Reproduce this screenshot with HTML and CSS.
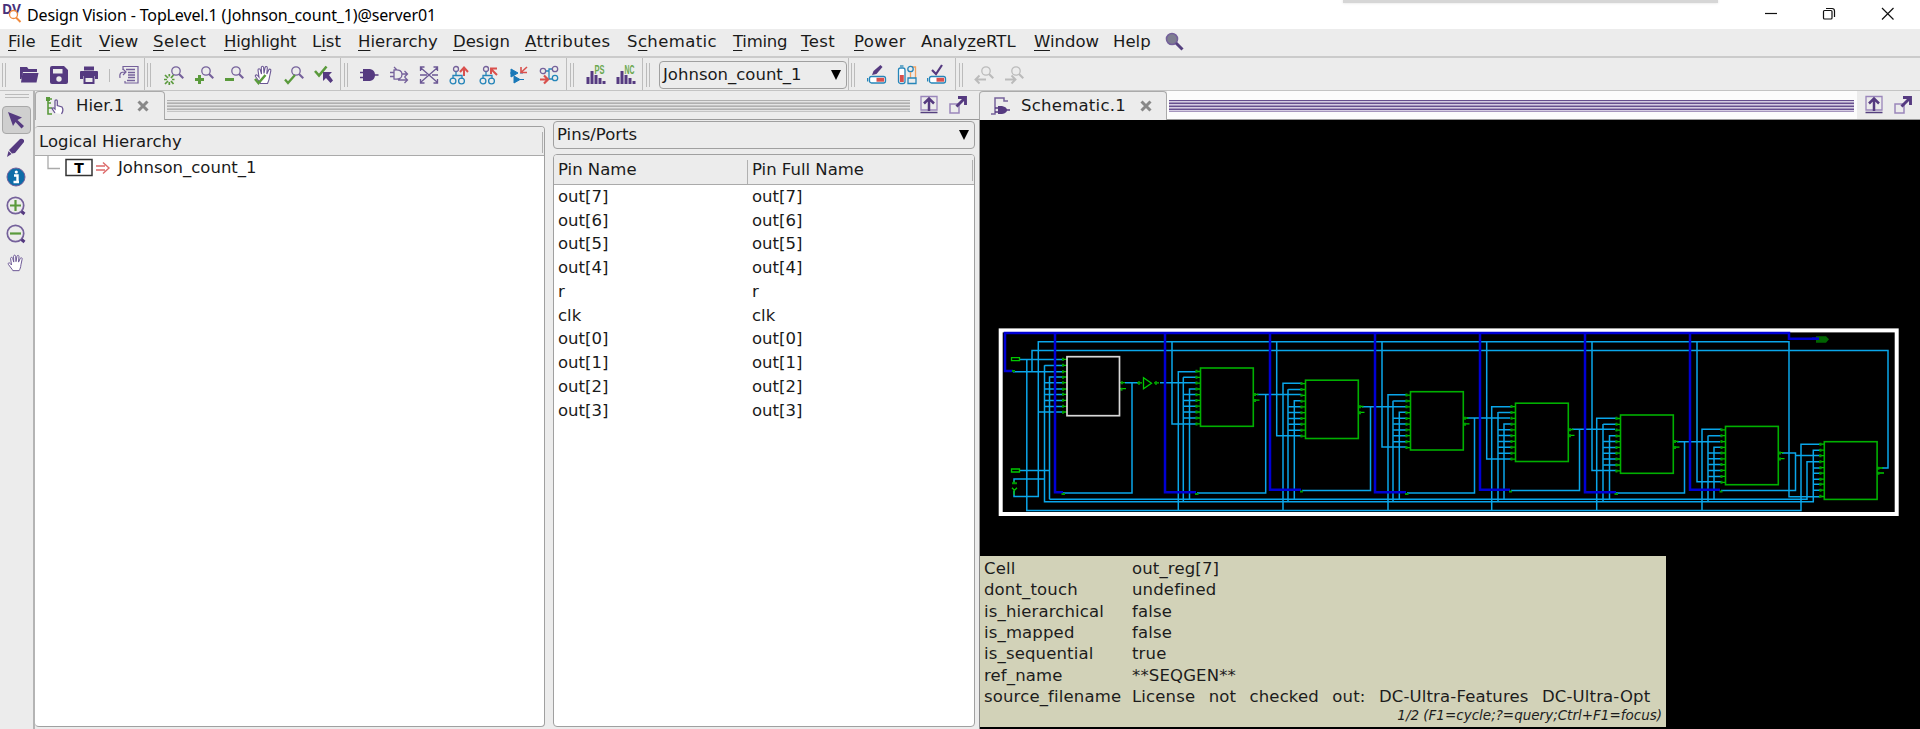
FILE: index.html
```html
<!DOCTYPE html>
<html lang="en">
<head>
<meta charset="utf-8">
<title>Design Vision - TopLevel.1 (Johnson_count_1)@server01</title>
<link rel="stylesheet" href="styles.css">
</head>
<body>
<svg class="defs" width="0" height="0">
  <defs>
    <symbol id="lens" viewBox="0 0 20 20"><circle cx="12" cy="6" r="4.2" fill="none" stroke="currentColor" stroke-width="1.3"/><path d="M15 9l4.3 4.3" stroke="currentColor" stroke-width="2.2"/></symbol>
    <symbol id="hand" viewBox="0 0 20 20"><path d="M6 17.5L1.5 11.5c-.8-1.5 1-2.3 2-1l1.5 1.7L4 5c0-1.7 2-1.7 2.3-.2L7.500 9 7.300 2.500c.2-1.600 2.100-1.600 2.300 0L10 8.500l1.100-6c.4-1.500 2.200-1.200 2.200.4L12.800 9l2-4.200c.8-1.300 2.400-.5 2 1L15.500 12c-.3 3-1 4.500-2 6.500H6.500z" fill="#fff" stroke="#6b5794" stroke-width="1.100"/></symbol>
    <symbol id="pin-up" viewBox="0 0 20 20"><path d="M2 1.500h16v13.500H2z" fill="none" stroke="#9a86bb" stroke-width="1.300"/><path d="M1.500 17.500h17" stroke="#55407f" stroke-width="1.500"/><path d="M10 16V4M5 8.500l5-5 5 5" fill="none" stroke="#553a80" stroke-width="2.500"/></symbol>
    <symbol id="pop-out" viewBox="0 0 20 20"><path d="M2 9h9v9H2z" fill="none" stroke="#9a86bb" stroke-width="1.500"/><path d="M8.500 11.500l8-8M10 2.500h7.500v7.500" fill="none" stroke="#553a80" stroke-width="2.900"/></symbol>
    <symbol id="nodes" viewBox="0 0 20 20"><g fill="none" stroke-width="1.300"><circle cx="7" cy="4" r="2.500" stroke="#75619b"/><path d="M7 6.500V10M4 14v-3.500h9V14" stroke="#2585b9"/><circle cx="4" cy="16" r="2.900" stroke="#2585b9"/><circle cx="12.500" cy="16" r="2.900" stroke="#2585b9"/></g></symbol>
    <symbol id="battery" viewBox="0 0 20 20"><rect x="2.500" y="11.500" width="16" height="6.500" rx="2" fill="#fff" stroke="#2585b9" stroke-width="1.300"/><path d="M.5 13v3.500" stroke="#2585b9" stroke-width="1.500"/><path d="M9.500 12.800h7.700v3.900H9.500z" fill="#d9504d"/></symbol>
    <g id="cell-pins">
      <path class="net" d="M-17.300 9.300h13M-17.300 26.600h13M-17.300 32.400h13M-17.300 38.200h13M-17.300 44h13M-17.300 50h13"/>
      <path class="stub" d="M-5 3.500h5M-5 9.300h5M-5 15.200h5M-5 21h5M-5 26.600h5M-5 32.400h5M-5 38.200h5M-5 44h5M-5 50h5M-5 55.900h5M53 26.300h5M53 32.200h6"/>
      <path class="knob" d="M-4 1.800v3M-4 7.800v3M-4 13.600v3M-4 19.500v3M-4 25.200v3M-4 31v3M-4 36.700v3M-4 42.500v3M-4 48.500v3M-4 54.400v3M54.500 25v3M54.500 31v3"/>
    </g>
    <g id="cell"><use href="#cell-pins"/><rect class="box" width="52.800" height="58.300"/></g>
  </defs>
</svg>

<header class="titlebar">
  <svg class="logo" width="20" height="24" viewBox="0 0 20 24"><text class="logo-text" x="0" y="14" textLength="19" lengthAdjust="spacingAndGlyphs">DV</text><circle cx="11.500" cy="14.500" r="4" fill="#fff" stroke="#f08a3c" stroke-width="1.300"/><path d="M14 17.500l4.500 4.500" stroke="#f08a3c" stroke-width="2"/></svg>
  <h1 class="title">Design Vision - TopLevel.1 (Johnson_count_1)@server01</h1>
  <div class="overhang"></div>
  <svg class="winbtns" width="130" height="14" viewBox="0 0 130 14" fill="none" stroke="#111" stroke-width="1.200"><path d="M1 6.500h12"/><rect x="59.500" y="3.500" width="8.500" height="8.500" rx="1"/><path d="M62 1.500h6a2.500 2.500 0 0 1 2.500 2.500v6"/><path d="M118 1l11.500 11.500M129.500 1L118 12.500"/></svg>
</header>

<nav class="menubar">
  <span><u>F</u>ile</span><span><u>E</u>dit</span><span><u>V</u>iew</span><span class="loose"><u>S</u>elect</span><span class="tight"><u>H</u>ighlight</span><span>L<u>i</u>st</span><span><u>H</u>ierarchy</span><span><u>D</u>esign</span><span class="loose"><u>A</u>ttributes</span><span class="loose">S<u>c</u>hematic</span><span class="tight"><u>T</u>iming</span><span class="loose"><u>T</u>est</span><span class="loose"><u>P</u>ower</span><span>Analy<u>z</u>eRTL</span><span><u>W</u>indow</span><span>Help</span>
  <svg width="20" height="20" viewBox="0 0 20 20"><circle cx="7" cy="7" r="5.500" fill="#7e7e90" stroke="#75619b" stroke-width="1.600"/><path d="M11 11l6.500 6.500" stroke="#55407f" stroke-width="3"/></svg>
</nav>

<div class="toolbar">
  <section class="group g1">
    <i class="grip"></i>
    <svg class="ic" viewBox="0 0 20 20" fill="#553a80"><path d="M1 2h7l1.500 2H18v3H4L2.500 14H1z"/><path d="M3.500 8h16L17.500 17.500H2z"/></svg>
    <svg class="ic" viewBox="0 0 20 20"><path d="M1 3q0-2 2-2h12l4 4v12q0 2-2 2H3q-2 0-2-2z" fill="#553a80"/><path d="M4 4h9.500v4.500H4z" fill="#ececec"/><circle cx="10" cy="14" r="2.700" fill="#ececec"/></svg>
    <svg class="ic" viewBox="0 0 20 20" fill="#553a80"><path d="M5 1.500h10v4H5zM1 7q0-1 1-1h16q1 0 1 1v7h-3v-3H4v3H1z"/><path d="M5.500 12h9v6h-9z" fill="none" stroke="#553a80" stroke-width="2"/></svg>
    <i class="minisep"></i>
    <svg class="ic" viewBox="0 0 20 20" fill="none" stroke="#75619b" stroke-width="1.200"><path d="M4 5V1.500h15V18h-13v-2"/><path d="M7 4.500h9M9 7.500h7M9 10h7M9 12.500h7M8 15.500h8" stroke-width="1.600"/><path d="M1 13c-1-6 2-6 5-6M4 4l3 3-3 3"/></svg>
  </section>
  <section class="group g2">
    <i class="grip"></i>
    <svg class="ic pur" viewBox="0 0 20 20"><use href="#lens"/><g stroke="#5a9a3c" stroke-width="1.700"><path d="M1 10l3 3M9.500 10L7 13M1 19l3-3M9.500 19l-2.500-3M0 14.500h3M8 14.500h2.500M5.300 9v2.500M5.300 17v3"/></g></svg>
    <svg class="ic pur" viewBox="0 0 20 20"><use href="#lens"/><path d="M5.500 10v9M1 14.500h9" stroke="#5a9a3c" stroke-width="3"/></svg>
    <svg class="ic pur" viewBox="0 0 20 20"><use href="#lens"/><path d="M1 14.500h9" stroke="#5a9a3c" stroke-width="3"/></svg>
    <svg class="ic" viewBox="0 0 20 20"><use href="#hand"/><path d="M1 14l3.500 4 7-8" fill="none" stroke="#5a9a3c" stroke-width="2.500"/></svg>
    <svg class="ic pur" viewBox="0 0 20 20"><use href="#lens"/><path d="M1 14.500l3 3.500 7-8" fill="none" stroke="#5a9a3c" stroke-width="2.300"/></svg>
    <svg class="ic" viewBox="0 0 20 20"><path d="M1 6l4 4.500L12.500 1.500" fill="none" stroke="#5a9a3c" stroke-width="2.600"/><path d="M9 7h9l-3 3 4 5.500-2.500 2.500-4.500-5-3 3z" fill="#553a80"/></svg>
  </section>
  <section class="group g3">
    <i class="grip"></i>
    <svg class="ic" viewBox="0 0 20 20" fill="#553a80"><path d="M4 4h7q5 1 5 6t-5 6H4z"/><path d="M1 7.500h4M1 12.500h4M15 10h4.500" stroke="#553a80" stroke-width="1.600"/></svg>
    <svg class="ic" viewBox="0 0 20 20" fill="none" stroke="#75619b" stroke-width="1.300"><path d="M5 5q8-1 8 4.500T5 14zM1 7.500h4M1 11.500h4M13 9h5M9 15h9M15.500 6l3 3-3 3M15.500 12l3 3-3 3M5 2l3 3"/></svg>
    <svg class="ic" viewBox="0 0 20 20" fill="none" stroke="#6b5794" stroke-width="1.300"><path d="M2 3l16 14M18 3L2 17M1 10h7M13 10h6M1.500 6V2h4M14.500 2h4v4M1.500 14v4h4M14.500 18h4v-4"/></svg>
    <svg class="ic" viewBox="0 0 20 20"><use href="#nodes"/><path d="M15 11V3M11 7l4-4.500L19 7" fill="none" stroke="#d9504d" stroke-width="2"/></svg>
    <svg class="ic" viewBox="0 0 20 20"><use href="#nodes"/><path d="M18 10l-6-6M12 9V3.500h6" fill="none" stroke="#d9504d" stroke-width="2"/></svg>
    <svg class="ic" viewBox="0 0 20 20"><path d="M2 4l7 4-7 4zM5 11l6 3.500L5 18z" fill="#1878b8" stroke="#1878b8"/><path d="M1 8h3M11 8h3M11 14.500h4" stroke="#1878b8"/><path d="M18 2l-5.500 5M12 2v5.500h6" fill="none" stroke="#d9504d" stroke-width="1.600"/></svg>
    <svg class="ic" viewBox="0 0 20 20" fill="none" stroke-width="1.300"><circle cx="4" cy="6" r="2.700" stroke="#75619b"/><path d="M7 6h3V4h3M10 6v8h3" stroke="#2585b9"/><circle cx="16" cy="4" r="2.700" stroke="#75619b"/><circle cx="16" cy="13" r="2.700" stroke="#2585b9"/><path d="M1 14.500h8M5 10.500l4 4-4 4" stroke="#d9504d" stroke-width="2.200"/></svg>
  </section>
  <section class="group g4">
    <i class="grip"></i>
    <svg class="ic" viewBox="0 0 20 20"><path d="M3 19v-7M7 19V6M11 19V10M15 19v-6M19 19v-3" stroke="#553a80" stroke-width="3"/><text class="tag" x="9.500" y="9" textLength="10" lengthAdjust="spacingAndGlyphs">PS</text></svg>
    <svg class="ic" viewBox="0 0 20 20"><path d="M3 19v-7M7 19V6M11 19V10M15 19v-6M19 19v-3" stroke="#553a80" stroke-width="3"/><text class="tag" x="9.500" y="9" textLength="10" lengthAdjust="spacingAndGlyphs">NC</text></svg>
  </section>
  <section class="group g5">
    <i class="grip"></i>
    <div class="combo"><span>Johnson_count_1</span><b class="tri"></b></div>
  </section>
  <section class="group g6">
    <i class="grip"></i>
    <svg class="ic" viewBox="0 0 20 20"><use href="#battery"/><path d="M5 10l1.500-4 7-6 2 2-6 7z" fill="#553a80"/></svg>
    <svg class="ic" viewBox="0 0 20 20" fill="none" stroke-width="1.300"><rect x="1.500" y="3" width="6.500" height="15.500" rx="2" stroke="#2585b9" fill="#fff"/><path d="M3 1h3.500" stroke="#2585b9"/><path d="M2.800 10h4v7h-4z" fill="#d9504d"/><path d="M15 2h3.500v11" stroke="#f0a060"/><circle cx="13.500" cy="4" r="2.700" stroke="#2585b9"/><path d="M13.500 7v6" stroke="#f0a060"/><path d="M11 13h8v5.500h-8z" stroke="#2585b9"/></svg>
    <svg class="ic" viewBox="0 0 20 20"><use href="#battery"/><path d="M5 5l4 4 6-9" fill="none" stroke="#553a80" stroke-width="2.200"/></svg>
  </section>
  <section class="group g7">
    <i class="grip"></i>
    <svg class="ic dis" viewBox="0 0 20 20"><use href="#lens"/><path d="M1.500 14.500H12M5.500 10.500l-4 4 4 4" fill="none" stroke="#bbb" stroke-width="1.900"/></svg>
    <svg class="ic dis" viewBox="0 0 20 20"><use href="#lens"/><path d="M1 14.500h10M7.500 10.500l4 4-4 4" fill="none" stroke="#bbb" stroke-width="1.900"/></svg>
  </section>
</div>

<main class="workspace">
  <aside class="tools">
    <i class="hgrip"></i>
    <span class="tool active"><svg class="ic" viewBox="0 0 20 20"><path d="M2 2l14 5.500-4.500 2.500 6.500 6-2.500 2.500-6-6.500L7 16z" fill="#553a80"/></svg></span>
    <span class="tool"><svg class="ic" viewBox="0 0 20 20"><path d="M3 12L14 1q2-1 4 1v2L9 15l-3 .5zM2.500 13l3 3L1 19z" fill="#553a80"/></svg></span>
    <span class="tool"><svg class="ic" viewBox="0 0 20 20"><circle cx="10" cy="10" r="9" fill="#0d6ca8" stroke="#75619b"/><path d="M8 8.500h3.500V15M7.500 15h5.500" stroke="#fff" stroke-width="2.400" fill="none"/><circle cx="10.300" cy="5" r="1.600" fill="#fff"/></svg></span>
    <span class="tool"><svg class="ic" viewBox="0 0 20 20"><circle cx="9.500" cy="9.500" r="8.200" fill="none" stroke="#75619b" stroke-width="1.700"/><path d="M15.500 15.500l3 2.500" stroke="#553a80" stroke-width="3"/><path d="M9.500 4v11M4 9.500h11" stroke="#5a9a3c" stroke-width="2.200"/></svg></span>
    <span class="tool"><svg class="ic" viewBox="0 0 20 20"><circle cx="9.500" cy="9.500" r="8.200" fill="none" stroke="#75619b" stroke-width="1.700"/><path d="M15.500 15.500l3 2.500" stroke="#553a80" stroke-width="3"/><path d="M4 9.500h11" stroke="#5a9a3c" stroke-width="2.200"/></svg></span>
    <span class="tool"><svg class="ic small" viewBox="0 0 20 20"><use href="#hand"/></svg></span>
  </aside>

  <section class="pane hier">
    <div class="tabrow">
      <div class="tab"><svg class="ic" viewBox="0 0 20 20"><path d="M3 1v17h4M3 7h3M3 12h4M3 3h4" fill="none" stroke="#5a9a3c" stroke-width="1.600"/><path d="M1 1h4v4H1z" fill="#5a9a3c"/><path d="M10 17l-3-4.500q1-1.500 3 .5V5c0-1.500 2.300-1.500 2.300 0v4.500l4.700 1.500q2 3-.5 7" fill="#fff" stroke="#6b5794" stroke-width="1.300"/></svg><span>Hier.1</span><svg class="x" viewBox="0 0 12 12"><path d="M1.500 1.500l9 9M10.500 1.500l-9 9" stroke="#888" stroke-width="3"/></svg></div>
      <div class="rail"><i class="stripes"></i></div>
      <div class="pbtns"><svg class="ic"><use href="#pin-up"/></svg><svg class="ic"><use href="#pop-out"/></svg></div>
    </div>
    <div class="split">
      <div class="tree">
        <div class="thead">Logical Hierarchy<i class="tick"></i></div>
        <div class="node">
          <svg width="66" height="30" viewBox="0 0 66 30"><path d="M13 0v12.500h12" fill="none" stroke="#aaa" stroke-width="1.300"/><rect x="31" y="3.500" width="26" height="16" fill="#fff" stroke="#333" stroke-width="1.500"/><text class="tbox" x="44" y="16.500" text-anchor="middle">T</text></svg>
          <svg class="arrow" width="16" height="14" viewBox="0 0 16 14"><path d="M1 5h9M1 9h9M8 1.500L14 7l-6 5.500" fill="none" stroke="#dd6a6a" stroke-width="1.400"/></svg>
          <span>Johnson_count_1</span>
        </div>
      </div>
      <div class="ports">
        <div class="combo wide"><span>Pins/Ports</span><b class="tri"></b></div>
        <div class="table">
          <div class="thead cols"><span>Pin Name</span><span>Pin Full Name</span><i class="tick"></i></div>
          <div class="rows">
            <div class="cols"><span>out[7]</span><span>out[7]</span></div>
            <div class="cols"><span>out[6]</span><span>out[6]</span></div>
            <div class="cols"><span>out[5]</span><span>out[5]</span></div>
            <div class="cols"><span>out[4]</span><span>out[4]</span></div>
            <div class="cols"><span>r</span><span>r</span></div>
            <div class="cols"><span>clk</span><span>clk</span></div>
            <div class="cols"><span>out[0]</span><span>out[0]</span></div>
            <div class="cols"><span>out[1]</span><span>out[1]</span></div>
            <div class="cols"><span>out[2]</span><span>out[2]</span></div>
            <div class="cols"><span>out[3]</span><span>out[3]</span></div>
          </div>
        </div>
      </div>
    </div>
  </section>

  <section class="pane schem">
    <div class="tabrow">
      <div class="tab"><svg class="ic" viewBox="0 0 20 20"><path d="M1 18h4V2h9v3h4" fill="none" stroke="#75619b" stroke-width="1.500"/><path d="M8 10h4q5 1 5 4t-5 4H8z" fill="#553a80"/><path d="M5 12h4M5 16h4M16 14h4" stroke="#553a80" stroke-width="1.500"/></svg><span>Schematic.1</span><svg class="x" viewBox="0 0 12 12"><path d="M1.500 1.500l9 9M10.500 1.500l-9 9" stroke="#888" stroke-width="3"/></svg></div>
      <div class="rail lit"><i class="stripes"></i></div>
      <div class="pbtns"><svg class="ic"><use href="#pin-up"/></svg><svg class="ic"><use href="#pop-out"/></svg></div>
    </div>
    <div class="canvas">
      <svg class="drawing" width="941" height="400" viewBox="979 120.3 941 400">
        <rect x="1000.700" y="330.700" width="896" height="183.600" fill="none" stroke="#fff" stroke-width="4"/>
        <!-- shared rails -->
        <path class="net" d="M1014 491v5.800h24.300V342H1789v155h31M1032 372v-21.300h856v117.600h-6M1020 359.700h43M1026.800 359.700v151H1801V444.500h20M1013 372h50M1044.500 365.500V502h768.800v-51.500h7M1049.500 499.500V377.300h13M1049.500 499.500H1807V462h14M1038.300 412.300h25M1020 470.700h29.500M1014 483v-3.700h30.500M1044.500 365.700h18M1044.500 383h18M1044.500 389.300h18M1044.500 394.700h18M1044.500 400.700h18M1044.500 406.700h18"/>
        <!-- cell outputs and feedback -->
        <path class="net" d="M1125 383h14M1132 383v110.300h-69M1160 383h36M1257 394.700h44M1265.700 394.700v98.600H1197M1362 407h44M1370.500 407v83.700H1302M1467 418.300h43M1474.500 418.300v75H1407M1572 429.600h43M1579.500 429.600v61.100H1511M1677 442h43M1684.500 442v51.300H1616M1782 453.300h13.500v37.400H1721M1795.500 455.700h25"/>
        <!-- cell inputs -->
        <path class="net" d="M1196 372h-17.700v138.700M1183.300 377.600V502M1196 389.300h-6.500v110.200M1196 424.300h-24V342M1301 383.500h-18v127.200M1288 389.500V502M1301 401h-6.700v98.500M1301 436h-24.300V342M1406 395h-18v115.700M1393 401v101M1406 412.500h-6.700v87M1406 447.300h-24V342M1511 407h-19.300v103.700M1498 412.300V502M1511 424.300h-7v75.200M1511 459.300h-24.300V342M1616 418.500h-19.300v92.200M1603 424.300V502M1616 436h-6.500v63.500M1616 470.700h-24V342M1721 429.500h-19v81.200M1708 435.700V502M1721 447.500h-7v52M1721 482h-24V342"/>
        <path class="net" d="M1813.300 468.300h8M1813.300 473.500h8M1813.300 479.500h8M1813.300 484.500h8M1813.300 490.500h8"/>
        <!-- buses -->
        <path class="bus" d="M1013 371.300h-8v-38.100h784v5.800h30M1055 333v159.500h8M1165 333v159.500h31M1270 333v157h31M1375 333v159.500h31M1480 333v157h30M1585 333v159.500h31M1690 333v157h30"/>
        <!-- cells -->
        <use href="#cell" x="1200.500" y="368.300"/><use href="#cell" x="1305.500" y="380.500"/><use href="#cell" x="1410.500" y="392"/><use href="#cell" x="1515.500" y="403.500"/><use href="#cell" x="1620.500" y="415.300"/><use href="#cell" x="1725.500" y="426.700"/>
        <path class="stub" d="M1062 359.700h5M1062 365.700h5M1062 372h5M1062 377.300h5M1062 383h5M1062 389.300h5M1062 394.700h5M1062 400.700h5M1062 406.700h5M1062 412.300h5M1120 383h5M1120 389h6M1819 444.500h5M1819 450.500h5M1819 456h5M1819 462h5M1819 468h5M1819 473.500h5M1819 479.500h5M1819 484.500h5M1819 490.500h5M1819 496.800h5M1877 468.300h6M1877 473.300h7"/>
        <path class="knob" d="M1063 358v3M1063 364v3M1063 370.500v3M1063 376v3M1063 381.500v3M1063 388v3M1063 393v3M1063 399v3M1063 405v3M1063 411v3M1122 381.500v3M1121.500 388v3M1820.500 443v3M1820.500 449v3M1820.500 454.500v3M1820.500 460.500v3M1820.500 466.500v3M1820.500 472v3M1820.500 478v3M1820.500 483v3M1820.500 489v3M1820.500 495v3M1878.500 467v3M1878.500 472v3"/>
        <rect x="1067" y="357" width="52.500" height="59" fill="none" stroke="#d8d8d8" stroke-width="1.700"/>
        <rect class="box" x="1824.300" y="442" width="52.800" height="57.700"/>
        <!-- ports and inverter -->
        <path class="stub" d="M1011.500 358h8v3h-8zM1011.500 469.300h8v3h-8zM1014 481v3M1014 495v-5l-2-2M1014 491l3-3M1143.500 378v11l8-5.500zM1137 383.200h5M1154 383.200h5"/>
        <path class="knob" d="M1012 483.500h5M1139 381.500v3.500M1156 381.500v3.500M1012 371.300h3M1061.500 494.300h3.500M1195 494.300h3.500M1300 491.800h3M1405 494.300h3.500M1509 491.800h3M1614.500 494.300h3.500M1719.500 491.800h3"/>
        <path d="M1816 336.500h10l3 3-3 3.500h-10z" fill="#006400"/><path class="bus" d="M1812 339h7"/>
      </svg>
      <div class="tip">
        <dl>
          <dt>Cell</dt><dd>out_reg[7]</dd>
          <dt>dont_touch</dt><dd>undefined</dd>
          <dt>is_hierarchical</dt><dd>false</dd>
          <dt>is_mapped</dt><dd>false</dd>
          <dt>is_sequential</dt><dd>true</dd>
          <dt>ref_name</dt><dd>**SEQGEN**</dd>
          <dt>source_filename</dt><dd class="wide-words">License not checked out: DC-Ultra-Features DC-Ultra-Opt</dd>
        </dl>
        <p class="hint">1/2 (F1=cycle;?=query;Ctrl+F1=focus)</p>
      </div>
    </div>
  </section>
</main>
</body>
</html>
```
FILE: styles.css
```css
* { box-sizing: border-box; }
body { margin: 0; width: 1920px; height: 729px; overflow: hidden; display: flex; flex-direction: column; background: #ececec; color: #1a1a1a; font: 16.5px/20px "DejaVu Sans", sans-serif; white-space: nowrap; }
.defs { position: absolute; }
u { text-decoration: underline; text-decoration-thickness: 1px; text-underline-offset: 3px; }

.titlebar { position: relative; height: 29px; flex: none; display: flex; align-items: flex-start; background: #fff; padding-left: 2px; }
.logo { flex: none; }
.logo-text { font: bold 14px "Open Sans", sans-serif; fill: #46307a; }
.title { margin: 4px 0 0 5px; font: 16px/22px "Noto Sans", sans-serif; color: #000; letter-spacing: -0.14px; }
.overhang { position: absolute; left: 1343px; top: 0; width: 375px; height: 3px; background: #d6d6d6; box-shadow: 0 0 3px #ddd; }
.winbtns { margin: 7px 26px 0 auto; }

.menubar { height: 29px; flex: none; display: grid; grid-template-columns: 42px 49px 54px 71px 88px 46px 95px 72px 102px 106px 68px 53px 67px 113px 79px 52px 20px; padding: 3px 0 0 8px; border-bottom: 2px solid #cbcbcb; }
.loose { letter-spacing: .4px; }
.tight { letter-spacing: -.25px; }

.toolbar { height: 33px; flex: none; display: flex; border-bottom: 1px solid #c4c4c4; }
.group { display: flex; align-items: center; padding-top: 2px; border-right: 1px solid #bdbdbd; }
.group .ic { margin: 0 5px; flex: none; }
.ic { width: 20px; height: 20px; display: block; overflow: visible; }
.pur { color: #75619b; }
.dis { color: #bbb; }
.grip { width: 4px; height: 24px; border: solid #bbb; border-width: 0 1px; flex: none; }
.g1 { width: 145px; padding-left: 2px; }
.g1 .grip { margin-right: 8px; }
.minisep { width: 1px; height: 13px; background: #bbb; margin: 0 4px 0 5px; }
.g2 { width: 196px; padding-left: 2px; }
.g2 .grip { margin-right: 8px; }
.g3 { width: 226px; padding-left: 3px; }
.g3 .grip { margin-right: 6px; }
.g4 { width: 76px; padding-left: 3px; }
.g4 .grip { margin-right: 6px; }
.g5 { width: 206px; padding-left: 3px; }
.g5 .grip { margin-right: 9px; }
.g6 { width: 107px; padding-left: 2px; }
.g6 .grip { margin-right: 7px; }
.g7 { padding-left: 3px; border: 0; }
.g7 .grip { margin-right: 6px; }
.tag { font: bold 12px "Liberation Sans", sans-serif; fill: #6aa84f; }

.combo { width: 188px; height: 28px; display: flex; align-items: center; justify-content: space-between; padding: 0 5px 0 3px; border: 1px solid #a0a0a0; border-radius: 4px; }
.combo.wide { width: 422px; height: 28px; padding-left: 3px; }
.tri { border: 5px solid transparent; border-top: 10px solid #000; border-bottom: 0; }

.workspace { flex: 1; display: flex; min-height: 0; }
.tools { width: 33px; display: flex; flex-direction: column; align-items: center; padding-top: 3px; }
.hgrip { width: 24px; height: 4px; border: solid #bbb; border-width: 1px 0; margin: 0 0 8px; }
.tool { width: 29px; height: 28.7px; display: flex; align-items: center; justify-content: center; margin: 0 0 0 -1px; }
.tool.active { height: 28px; background: #cfcfcf; border: 1px solid #a8a8a8; border-radius: 4px; }
.small { width: 18px; height: 18px; }

.pane { display: flex; flex-direction: column; }
.hier { width: 946px; border-left: 2px solid #b4b4b4; }
.schem { width: 941px; }
.tabrow { height: 29px; flex: none; display: flex; border-bottom: 1px solid #999; }
.tab { display: flex; align-items: center; height: 29px; background: #ececec; border: 1px solid #aaa; border-bottom: 0; border-radius: 4px 4px 0 0; }
.hier .tab { width: 130px; padding-left: 9px; }
.hier .tab span { margin: 0 13px 0 11px; }
.schem .tab { width: 188px; padding-left: 10px; }
.schem .tab span { margin: 0 14px 0 11px; letter-spacing: .25px; }
.x { width: 12px; height: 12px; }
.rail { flex: 1; display: flex; align-items: center; padding: 1px 3px 0 2px; }
.rail.lit { background: #fcfcfc; }
.stripes { flex: 1; height: 12px; background: repeating-linear-gradient(#b0b0b0 0 1px, #e4e4e4 1px 2px, #c4c4c4 2px 3px); }
.lit .stripes { background: repeating-linear-gradient(#67508f 0 1px, #d6cde3 1px 2px, #a596bd 2px 3px); }
.pbtns { width: 63px; display: flex; gap: 9px; align-items: center; padding-left: 7px; }
.hier .pbtns { width: 67px; padding-left: 7px; }
.hier .rail { padding-right: 2px; }

.split { flex: 1; display: flex; gap: 8px; min-height: 0; }
.tree { width: 510px; margin: 6px 0 2px; border: 1px solid #a0a0a0; border-left-width: 0; border-radius: 4px; background: #fff; overflow: hidden; }
.thead { position: relative; height: 29px; padding: 5px 0 0 4px; background: #ececec; border-bottom: 1px solid #aaa; }
.tick { position: absolute; right: 1px; top: 5px; width: 1px; height: 21px; background: #b0b0b0; }
.node { display: flex; align-items: flex-start; height: 30px; }
.node .arrow { margin: 5px 0 0 -6px; }
.node span { margin: 2px 0 0 7px; }
.tbox { font: bold 14px "DejaVu Sans", sans-serif; fill: #000; }
.ports { width: 422px; padding-top: 1px; display: flex; flex-direction: column; gap: 5px; }
.combo.wide { flex: none; }
.table { flex: 1; margin-bottom: 2px; border: 1px solid #a0a0a0; border-radius: 4px; background: #fff; overflow: hidden; }
.cols { display: grid; grid-template-columns: 194px 1fr; }
.thead.cols { height: 30px; padding-top: 5px; }
.thead.cols span + span { border-left: 1px solid #b0b0b0; margin-left: -5px; padding-left: 4px; }
.rows { padding: 0 0 0 4px; }
.rows .cols { height: 23.74px; line-height: 24px; }

.canvas { position: relative; flex: 1; background: #000; border-left: 1px solid #888; }
.drawing { display: block; margin-left: -1px; }
.net { fill: none; stroke: #0aa6ea; stroke-width: 1.5; }
.bus { fill: none; stroke: #0000d4; stroke-width: 2.5; }
.stub { fill: none; stroke: #00c800; stroke-width: 1.3; }
.knob { fill: none; stroke: #009a00; stroke-width: 2; }
.box { fill: none; stroke: #00b000; stroke-width: 1.6; }
.tip { position: absolute; left: 0; bottom: 2px; width: 686px; height: 171px; background: #d2d2b8; color: #1c1c1c; padding: 2px 4px 0 4px; letter-spacing: .15px; }
.tip dl { margin: 0; display: grid; grid-template-columns: 148px 1fr; line-height: 21.33px; }
.tip dt, .tip dd { margin: 0; }
.wide-words { word-spacing: 8px; }
.hint { margin: 0; text-align: right; font-style: italic; font-size: 13.5px; line-height: 17px; letter-spacing: 0; }
```
